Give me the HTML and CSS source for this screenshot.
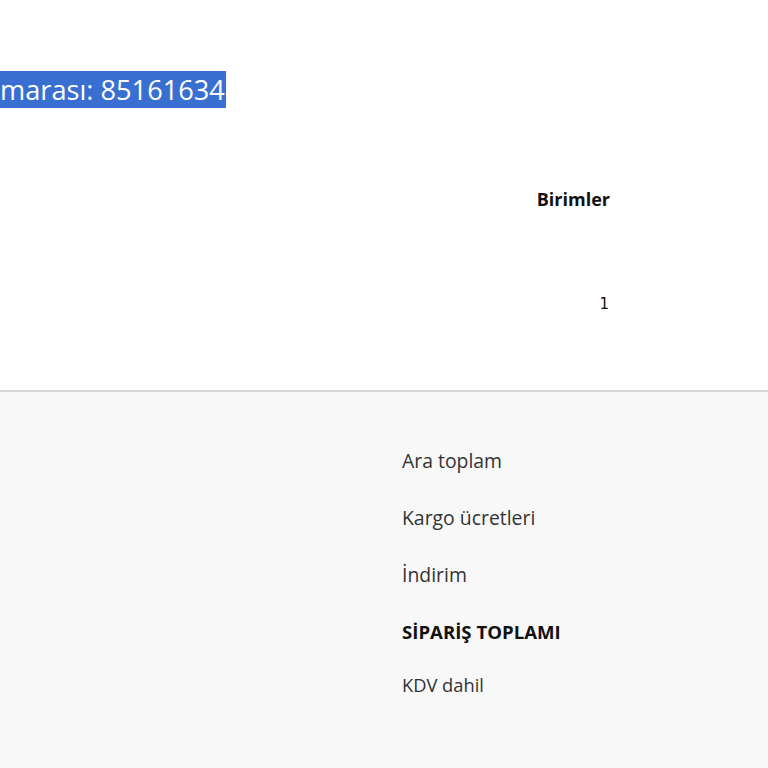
FILE: index.html
```html
<!DOCTYPE html>
<html lang="tr">
<head>
  <meta charset="UTF-8">
  <meta name="viewport" content="width=device-width, initial-scale=1.0">
  <title>Sipariş özeti</title>
  <link rel="stylesheet" href="styles.css">
</head>
<body>
  <!-- Order header (selected text, page scrolled to the right) -->
  <div class="order-head">
    <h1 class="order-no"><span class="selected">marası: 85161634</span></h1>
  </div>

  <!-- Items table -->
  <div class="items">
    <div class="items-row items-header">
      <span class="col-units">Birimler</span>
    </div>
    <div class="items-row items-line">
      <span class="col-units qty">1</span>
    </div>
  </div>

  <!-- Totals -->
  <div class="totals">
    <div class="total-row">Ara toplam</div>
    <div class="total-row">Kargo ücretleri</div>
    <div class="total-row">İndirim</div>
    <div class="total-row total-strong">SİPARİŞ TOPLAMI</div>
    <div class="total-row total-note">KDV dahil</div>
  </div>
</body>
</html>
```

FILE: styles.css
```css
:root {
  --text: #111111;
  --text-soft: #333333;
  --select: #3a6fd2;
  --panel: #f8f8f8;
  --line: #d8d8d8;
}

body {
  margin: 0;
  padding: 0;
  font-family: "Open Sans", "Noto Sans", Arial, sans-serif;
  color: var(--text);
  background: #ffffff;
  overflow: hidden;
  min-height: 100vh;
  display: flex;
  flex-direction: column;
}

.order-head {
  padding-top: 74px;
  white-space: nowrap;
}

.order-no {
  margin: 0;
  font-size: 27.2px;
  font-weight: 400;
  line-height: 31px;
}

.selected {
  background: var(--select);
  color: #ffffff;
  padding-right: 1px;
}

.items {
  width: 610px;
  padding-top: 76px;
}

.items-row {
  display: flex;
  justify-content: flex-end;
}

.items-header {
  height: 36px;
  align-items: center;
  font-size: 18px;
  font-weight: 700;
}

.items-line {
  margin-top: 75px;
  height: 24px;
  align-items: center;
  font-size: 16px;
}

.qty {
  font-family: "DejaVu Sans", sans-serif;
  font-size: 15px;
  padding-right: 1px;
}

.totals {
  flex: 1;
  margin-top: 74px;
  border-top: 2px solid var(--line);
  background: var(--panel);
  padding: 40px 0 40px 402px;
}

.total-row {
  height: 57px;
  line-height: 57px;
  font-size: 19.4px;
  color: var(--text-soft);
}

.total-strong {
  font-size: 18.6px;
  font-weight: 700;
  color: var(--text);
}

.total-note {
  height: 50px;
  line-height: 50px;
  font-size: 18.3px;
}
```
